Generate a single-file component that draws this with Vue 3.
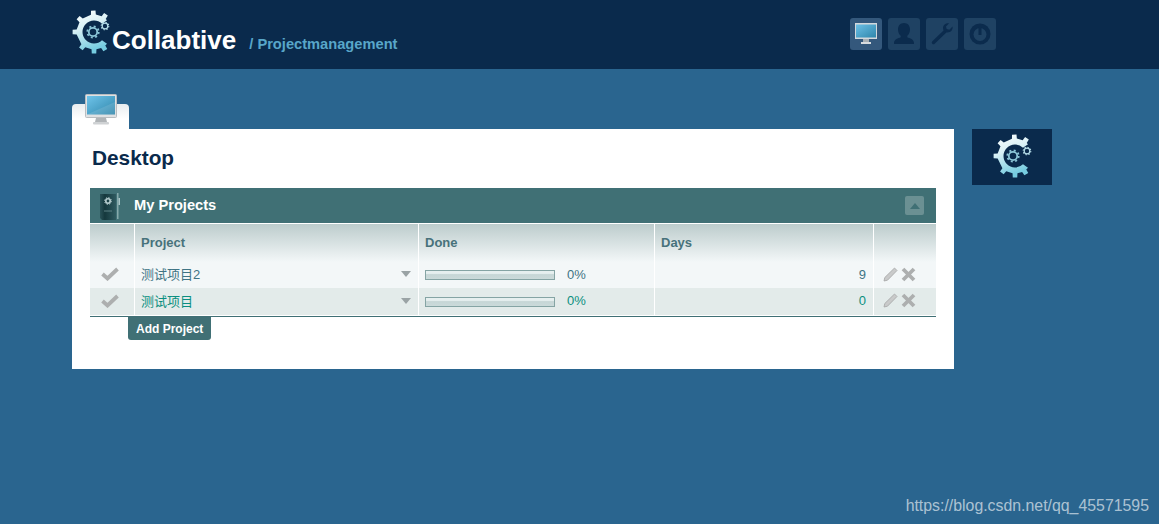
<script setup>
const rows = [
  { name: '测试项目2', days: 9, tone: 'blue' },
  { name: '测试项目', days: 0, tone: 'green' },
]

function gearPath() {
  const cx = 22, cy = 22, rOut = 17.5, rTip = 21.5, rIn = 11.5
  const toPt = (r, deg) => {
    const a = (deg * Math.PI) / 180
    return `${(cx + r * Math.cos(a)).toFixed(2)} ${(cy + r * Math.sin(a)).toFixed(2)}`
  }
  const start = 42, end = 318
  const teeth = [58, 90, 128, 180, 222, 268, 304]
  let d = `M${toPt(rOut, start)}`
  for (const t of teeth) {
    d += ` L${toPt(rOut, t - 8)} L${toPt(rTip, t - 6)} L${toPt(rTip, t + 6)} L${toPt(rOut, t + 8)}`
  }
  d += ` L${toPt(rOut, end)} L${toPt(rIn, end - 4)} A${rIn} ${rIn} 0 1 0 ${toPt(rIn, start + 4)} Z`
  return d
}
const gear = gearPath()
</script>

<template>
  <div class="page">
    <header class="topbar">
      <svg class="logo-gear" viewBox="0 0 44 44" width="44" height="44" aria-hidden="true">
        <defs>
          <linearGradient id="gearFill" x1="0" y1="0" x2="0.300" y2="1">
            <stop offset="0" stop-color="#ffffff" />
            <stop offset="0.450" stop-color="#d8f0f5" />
            <stop offset="1" stop-color="#76cce0" />
          </linearGradient>
        </defs>
        <path :d="gear" fill="url(#gearFill)" />
        <circle cx="21" cy="22" r="4.200" fill="none" stroke="#8cc6d8" stroke-width="1.800" />
        <circle cx="21" cy="22" r="5.700" fill="none" stroke="#8cc6d8" stroke-width="1.800" stroke-dasharray="2 2.480" />
        <circle cx="33" cy="16" r="2.800" fill="none" stroke="#b5dde8" stroke-width="1.200" />
        <circle cx="33" cy="16" r="3.800" fill="none" stroke="#b5dde8" stroke-width="1.100" stroke-dasharray="1.400 1.580" />
      </svg>
      <span class="brand">Collabtive</span>
      <span class="tagline">/ Projectmanagement</span>
      <nav class="topnav">
        <a class="navbtn active">
          <svg viewBox="0 0 32 32" width="32" height="32" aria-hidden="true">
            <defs>
              <linearGradient id="screenA" x1="0" y1="0" x2="1" y2="1">
                <stop offset="0" stop-color="#6cc0e6" />
                <stop offset="1" stop-color="#2f86ab" />
              </linearGradient>
            </defs>
            <rect x="5" y="5" width="22" height="16" fill="#d3d8dc" />
            <rect x="6" y="6.500" width="20" height="13" fill="url(#screenA)" />
            <rect x="13" y="21" width="6" height="3" fill="#a9b0b5" />
            <rect x="11" y="24" width="10" height="2" fill="#d8dcdf" />
          </svg>
        </a>
        <a class="navbtn">
          <svg viewBox="0 0 32 32" width="32" height="32" aria-hidden="true">
            <path d="M16 5c3.800 0 6 2.800 6 6.400 0 2.800-1.200 5-2.700 6.300v1.600c2.400 1 6.700 2 6.700 5.700v1H6v-1c0-3.700 4.300-4.700 6.700-5.700v-1.600C11.200 16.400 10 14.200 10 11.400 10 7.800 12.200 5 16 5z" fill="#0b2b4d" />
          </svg>
        </a>
        <a class="navbtn">
          <svg viewBox="0 0 32 32" width="32" height="32" aria-hidden="true">
            <path d="M7.500 24.500 19.500 13" stroke="#0b2b4d" stroke-width="3.400" stroke-linecap="round" fill="none" />
            <path d="M26.500 8.500l-3.200 3.200-2.600-.7-.7-2.600 3.200-3.100c-3-.6-6.200 1.500-6.200 4.700 0 2.300 1.500 4.500 4.300 4.500 3.700 0 5.900-2.900 5.200-6z" fill="#0b2b4d" />
          </svg>
        </a>
        <a class="navbtn">
          <svg viewBox="0 0 32 32" width="32" height="32" aria-hidden="true">
            <circle cx="16" cy="16" r="10.500" fill="#0b2b4d" />
            <circle cx="16" cy="16.500" r="6.500" fill="#1f4263" />
            <path d="M16 9v8" stroke="#0b2b4d" stroke-width="3" />
          </svg>
        </a>
      </nav>
    </header>

    <main class="main">
      <section class="column">
        <div class="tab">
          <svg class="tab-monitor" viewBox="0 0 32 32" width="32" height="32" aria-hidden="true">
            <defs>
              <linearGradient id="screenB" x1="0" y1="0" x2="1" y2="1">
                <stop offset="0" stop-color="#6fc4ea" />
                <stop offset="1" stop-color="#2f86ab" />
              </linearGradient>
            </defs>
            <rect x="0.500" y="0.500" width="31" height="23" rx="1" fill="#dfe1e3" stroke="#b9bdc0" />
            <rect x="2" y="2" width="28" height="18.500" fill="url(#screenB)" />
            <path d="M2 20.500 30 8v12.500z" fill="#fff" opacity="0.120" />
            <path d="M11 24h10l1 4H10z" fill="#b0b4b7" />
            <rect x="8" y="28" width="16" height="2.500" rx="1" fill="#cfd2d4" />
          </svg>
        </div>
        <div class="card">
          <h1 class="title">Desktop</h1>
          <div class="panel">
            <div class="panel-head">
              <svg class="book" viewBox="0 0 24 28" width="24" height="28" aria-hidden="true">
                <defs>
                  <linearGradient id="bookFill" x1="0" y1="0" x2="1" y2="0">
                    <stop offset="0" stop-color="#2a5258" />
                    <stop offset="0.300" stop-color="#15383d" />
                    <stop offset="1" stop-color="#2f5a60" />
                  </linearGradient>
                </defs>
                <path d="M2 2h16v26H4l-2-2z" fill="url(#bookFill)" />
                <path d="M19 1h1.500v26H19z" fill="#86a9ab" />
                <path d="M20.500 6H22v7h-1.500z" fill="#a9c6c8" />
                <circle cx="10" cy="9" r="2.200" fill="none" stroke="#b9d0d2" stroke-width="1.600" />
                <circle cx="10" cy="9" r="3.400" fill="none" stroke="#b9d0d2" stroke-width="1" stroke-dasharray="1.300 1.370" />
                <path d="M6 19h8" stroke="#5d8185" />
              </svg>
              <h2 class="panel-title">My Projects</h2>
              <button class="toggle" type="button" aria-label="Collapse"><span class="toggle-arrow"></span></button>
            </div>
            <table class="grid">
              <colgroup>
                <col class="c1" /><col class="c2" /><col class="c3" /><col class="c4" /><col class="c5" />
              </colgroup>
              <thead>
                <tr>
                  <th></th>
                  <th>Project</th>
                  <th>Done</th>
                  <th>Days</th>
                  <th></th>
                </tr>
              </thead>
              <tbody>
                <tr v-for="row in rows" :key="row.name" :class="row.tone">
                  <td class="check-cell">
                    <svg viewBox="0 0 18 14" width="18" height="14" aria-hidden="true">
                      <path d="M1.500 7 6.500 11.500 16.500 2" fill="none" stroke="#adafaf" stroke-width="3.800" />
                    </svg>
                  </td>
                  <td>
                    <div class="name-cell">
                      <span class="name">{{ row.name }}</span>
                      <span class="caret"></span>
                    </div>
                  </td>
                  <td>
                    <div class="done-cell">
                      <span class="bar"></span>
                      <span class="pct">0%</span>
                    </div>
                  </td>
                  <td class="days">{{ row.days }}</td>
                  <td>
                    <div class="tools">
                      <svg viewBox="0 0 15 15" width="15" height="15" aria-hidden="true">
                        <path d="M1 14l.8-3.500L11.500 1l2.500 2.500L4.500 13.200z" fill="#c9caca" stroke="#a3a5a5" stroke-width="0.800" />
                      </svg>
                      <svg viewBox="0 0 15 15" width="15" height="15" aria-hidden="true">
                        <path d="M2 2l11 11M13 2 2 13" stroke="#adafaf" stroke-width="3.800" />
                      </svg>
                    </div>
                  </td>
                </tr>
              </tbody>
            </table>
            <button class="add" type="button">Add Project</button>
          </div>
        </div>
      </section>
      <aside class="sidebox">
        <svg viewBox="0 0 44 44" width="44" height="44" aria-hidden="true">
          <path :d="gear" fill="url(#gearFill)" />
          <circle cx="20" cy="22" r="4.200" fill="none" stroke="#8cc6d8" stroke-width="1.800" />
          <circle cx="20" cy="22" r="5.700" fill="none" stroke="#8cc6d8" stroke-width="1.800" stroke-dasharray="2 2.480" />
          <circle cx="34" cy="17" r="2.800" fill="none" stroke="#b5dde8" stroke-width="1.200" />
          <circle cx="34" cy="17" r="3.800" fill="none" stroke="#b5dde8" stroke-width="1.100" stroke-dasharray="1.400 1.580" />
        </svg>
      </aside>
    </main>
    <div class="watermark">https://blog.csdn.net/qq_45571595</div>
  </div>
</template>

<style scoped>
.page {
  position: relative;
  height: 524px;
  overflow: hidden;
  background: #2a658f;
  font-family: "Liberation Sans", "Noto Sans CJK SC", sans-serif;
}
.topbar {
  display: flex;
  align-items: flex-start;
  height: 69px;
  box-sizing: border-box;
  padding: 10px 163px 0 72px;
  background: #0a2a4c;
}
.logo-gear {
  flex: none;
  margin-right: -4px;
}
.brand {
  margin-top: 14px;
  font-size: 26px;
  line-height: 32px;
  font-weight: 700;
  color: #fff;
}
.tagline {
  margin: 26px 0 0 13px;
  font-size: 14.67px;
  line-height: 16px;
  font-weight: 700;
  color: #58a6c9;
}
.topnav {
  display: flex;
  gap: 6px;
  margin: 8px 0 0 auto;
}
.navbtn {
  display: block;
  width: 32px;
  height: 32px;
  border-radius: 3px;
  background: #1f4263;
}
.navbtn.active {
  background: #34587c;
}
.navbtn svg {
  display: block;
}
.main {
  display: flex;
  align-items: flex-start;
  gap: 18px;
  padding: 35px 0 0 72px;
}
.column {
  width: 882px;
}
.tab {
  width: 57px;
  height: 25px;
  border-radius: 4px 4px 0 0;
  background: linear-gradient(#e9edef, #fff 60%);
}
.tab-monitor {
  display: block;
  position: relative;
  top: -10px;
  left: 13px;
}
.card {
  height: 240px;
  box-sizing: border-box;
  padding: 17px 18px 0;
  background: #fff;
}
.title {
  margin: 0 0 18px 2px;
  font-size: 20.8px;
  line-height: 24px;
  font-weight: 700;
  color: #0a2a4c;
}
.panel-head {
  display: flex;
  align-items: center;
  height: 35px;
  padding: 0 12px 0 8px;
  background: #407075;
}
.book {
  flex: none;
}
.panel-title {
  margin: 0 0 2px 12px;
  font-size: 14.67px;
  line-height: 18px;
  font-weight: 700;
  color: #fff;
}
.toggle {
  display: flex;
  align-items: center;
  justify-content: center;
  width: 19px;
  height: 19px;
  margin-left: auto;
  padding: 0;
  border: 0;
  border-radius: 2px;
  background: #6b9093;
}
.toggle-arrow {
  width: 0;
  height: 0;
  border-left: 5px solid transparent;
  border-right: 5px solid transparent;
  border-bottom: 6px solid #407075;
}
.grid {
  width: 846px;
  table-layout: fixed;
  border-collapse: separate;
  border-spacing: 0;
  border-top: 1px solid #fff;
  border-bottom: 1px solid #407075;
  font-size: 13px;
  color: #3f7484;
}
.c1 { width: 44px; }
.c2 { width: 284px; }
.c3 { width: 236px; }
.c4 { width: 219px; }
.c5 { width: 63px; }
th {
  height: 38px;
  box-sizing: border-box;
  padding: 0 6px 2px;
  border-left: 1px solid #fff;
  text-align: left;
  font-size: 13px;
  font-weight: 700;
  color: #47727b;
  background: linear-gradient(#bccccc, #f3f7f8);
}
th:first-child,
td:first-child {
  border-left: 0;
}
td {
  box-sizing: border-box;
  height: 26px;
  padding: 0 6px;
  border-left: 1px solid #fff;
  background: #f3f7f8;
}
tr.green td {
  height: 28px;
  background: #e3ebea;
  color: #0b8f80;
  border-bottom: 1px solid #fff;
}
.check-cell {
  padding: 0 0 2px;
  text-align: center;
}
.check-cell svg {
  display: block;
  margin: 0 auto 0 11px;
}
.name-cell {
  display: flex;
  align-items: center;
  justify-content: space-between;
  padding-right: 1px;
}
.name {
  padding-bottom: 3px;
}
.caret {
  width: 0;
  height: 0;
  margin-bottom: 2px;
  border-left: 5px solid transparent;
  border-right: 5px solid transparent;
  border-top: 6px solid #9aa3a5;
}
.done-cell {
  display: flex;
  align-items: center;
  gap: 12px;
}
.pct {
  padding-bottom: 2px;
}
.bar {
  width: 130px;
  height: 10px;
  box-sizing: border-box;
  border: 1px solid #85a4a4;
  background: linear-gradient(#e6efef, #e6efef 30%, #c6d6d6 45%, #cbdada);
}
td.days {
  padding: 0 7px 2px 6px;
  text-align: right;
}
.tools {
  display: flex;
  gap: 3px;
  padding: 0 0 2px 3px;
}
.tools svg {
  display: block;
}
.add {
  display: block;
  height: 23px;
  margin-left: 38px;
  padding: 0 8px;
  border: 0;
  border-radius: 0 0 3px 3px;
  background: #407075;
  font-family: inherit;
  font-size: 12px;
  font-weight: 700;
  color: #fff;
}
.sidebox {
  display: flex;
  justify-content: center;
  align-items: center;
  width: 80px;
  height: 56px;
  box-sizing: border-box;
  padding: 0 0 2px 6px;
  margin-top: 25px;
  background: #0a2a4c;
}
.watermark {
  position: absolute;
  right: 10px;
  bottom: 8px;
  font-size: 15.87px;
  line-height: 20px;
  color: rgba(255, 255, 255, 0.62);
}
</style>
